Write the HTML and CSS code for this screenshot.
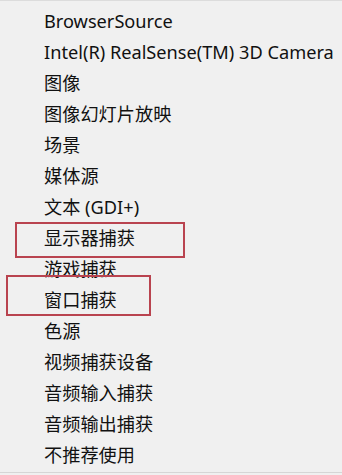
FILE: index.html
```html
<!DOCTYPE html>
<html lang="zh-CN">
<head>
<meta charset="utf-8">
<link rel="stylesheet" href="styles.css">
</head>
<body>
<div class="menu">
  <ul class="items">
    <li class="item">BrowserSource</li>
    <li class="item">Intel(R) RealSense(TM) 3D Camera</li>
    <li class="item">图像</li>
    <li class="item">图像幻灯片放映</li>
    <li class="item">场景</li>
    <li class="item">媒体源</li>
    <li class="item">文本 (GDI+)</li>
    <li class="item">显示器捕获</li>
    <li class="item">游戏捕获</li>
    <li class="item">窗口捕获</li>
    <li class="item">色源</li>
    <li class="item">视频捕获设备</li>
    <li class="item">音频输入捕获</li>
    <li class="item">音频输出捕获</li>
    <li class="item">不推荐使用</li>
  </ul>
  <div class="mark mark-display"></div>
  <div class="mark mark-window"></div>
</div>
</body>
</html>
```
FILE: styles.css
```css
html, body {
  margin: 0;
  padding: 0;
  background: #f0f0f0;
}
.menu {
  position: relative;
  width: 342px;
  height: 475px;
  box-sizing: border-box;
  background: #f0f0f0;
  border-top: 1px solid #dcdcdc;
  overflow: hidden;
}
.menu::after {
  content: "";
  position: absolute;
  left: 0;
  right: 0;
  top: 471px;
  height: 1px;
  background: #d6d6d6;
}
.items {
  list-style: none;
  margin: 0;
  padding: 4.5px 0 0 0;
}
.item {
  height: 31.07px;
  line-height: 31.07px;
  padding-left: 44px;
  font-family: "Noto Sans", "Noto Sans CJK SC", sans-serif;
  font-size: 18.2px;
  color: #111111;
  white-space: nowrap;
}
.mark {
  position: absolute;
  border: 2px solid #b9434f;
  box-sizing: border-box;
}
.mark-display {
  left: 15px;
  top: 221px;
  width: 170px;
  height: 36px;
}
.mark-window {
  left: 6px;
  top: 274px;
  width: 145px;
  height: 41px;
}
```
